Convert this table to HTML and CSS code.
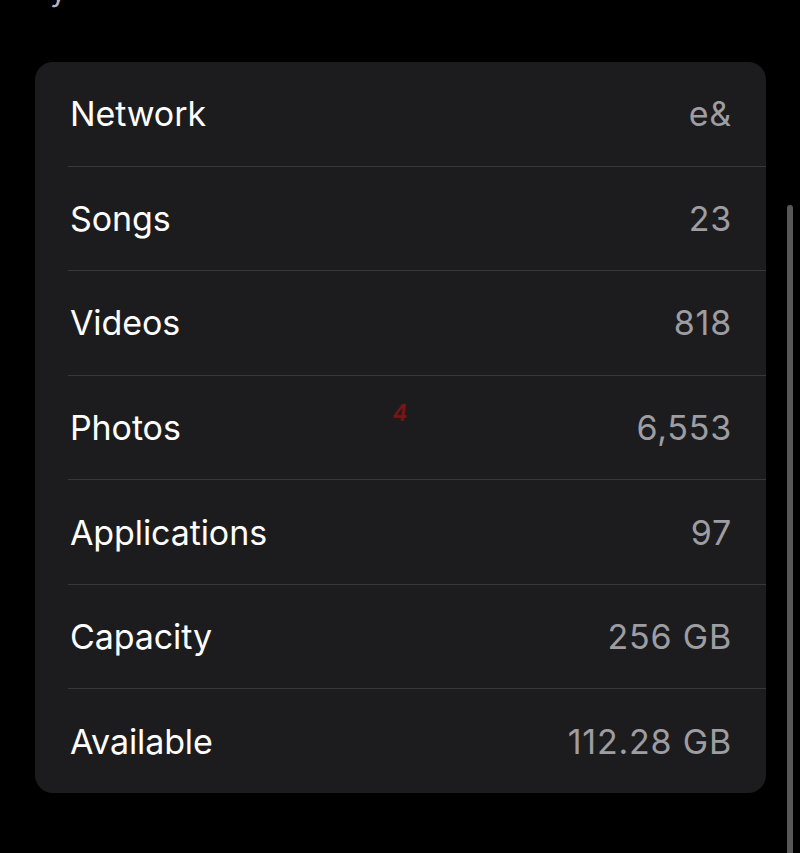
FILE: index.html
```html
<!DOCTYPE html>
<html>
<head>
<meta charset="utf-8">
<link rel="stylesheet" href="styles.css">
</head>
<body>
<div class="screen">
  <div class="title">y</div>
  <div class="card">
    <div class="row"><span class="label">Network</span><span class="value">e&amp;</span></div>
    <div class="row"><span class="label">Songs</span><span class="value">23</span></div>
    <div class="row"><span class="label">Videos</span><span class="value">818</span></div>
    <div class="row"><span class="label">Photos</span><span class="value">6,553</span></div>
    <div class="row"><span class="label">Applications</span><span class="value">97</span></div>
    <div class="row"><span class="label">Capacity</span><span class="value">256 GB</span></div>
    <div class="row last"><span class="label">Available</span><span class="value">112.28 GB</span></div>
    <div class="mark">4</div>
  </div>
  <div class="scrollbar"></div>
</div>
</body>
</html>
```
FILE: styles.css
```css
html, body {
  margin: 0;
  padding: 0;
  background: #000;
}
.screen {
  position: relative;
  width: 800px;
  height: 853px;
  overflow: hidden;
  font-family: Inter, "Liberation Sans", sans-serif;
}
.title {
  height: 10px;
  margin-top: -27px;
  padding-left: 50px;
  font-size: 30px;
  line-height: 34px;
  color: #b8b8bc;
}
.card {
  position: relative;
  margin-top: 79px;
  margin-left: 35px;
  width: 731px;
  height: 731px;
  background: #1c1c1e;
  border-radius: 18px;
  display: flex;
  flex-direction: column;
}
.row {
  flex: 1;
  margin-left: 33px;
  padding-left: 2px;
  padding-right: 35px;
  display: flex;
  align-items: center;
  justify-content: space-between;
  border-bottom: 1.5px solid #38383a;
  font-size: 34px;
  letter-spacing: -0.1px;
}
.row.last {
  border-bottom: none;
}
.label {
  color: #ffffff;
}
.value {
  color: #9d9da2;
  letter-spacing: 0.8px;
  margin-right: -1px;
}
.mark {
  position: absolute;
  left: 358px;
  top: 338px;
  font-size: 22px;
  font-weight: 700;
  color: #7a1515;
  transform: skewX(-8deg);
  filter: blur(0.6px);
}
.scrollbar {
  position: absolute;
  left: 787px;
  top: 205px;
  width: 6px;
  height: 660px;
  border-radius: 3px;
  background: #585858;
}
```
